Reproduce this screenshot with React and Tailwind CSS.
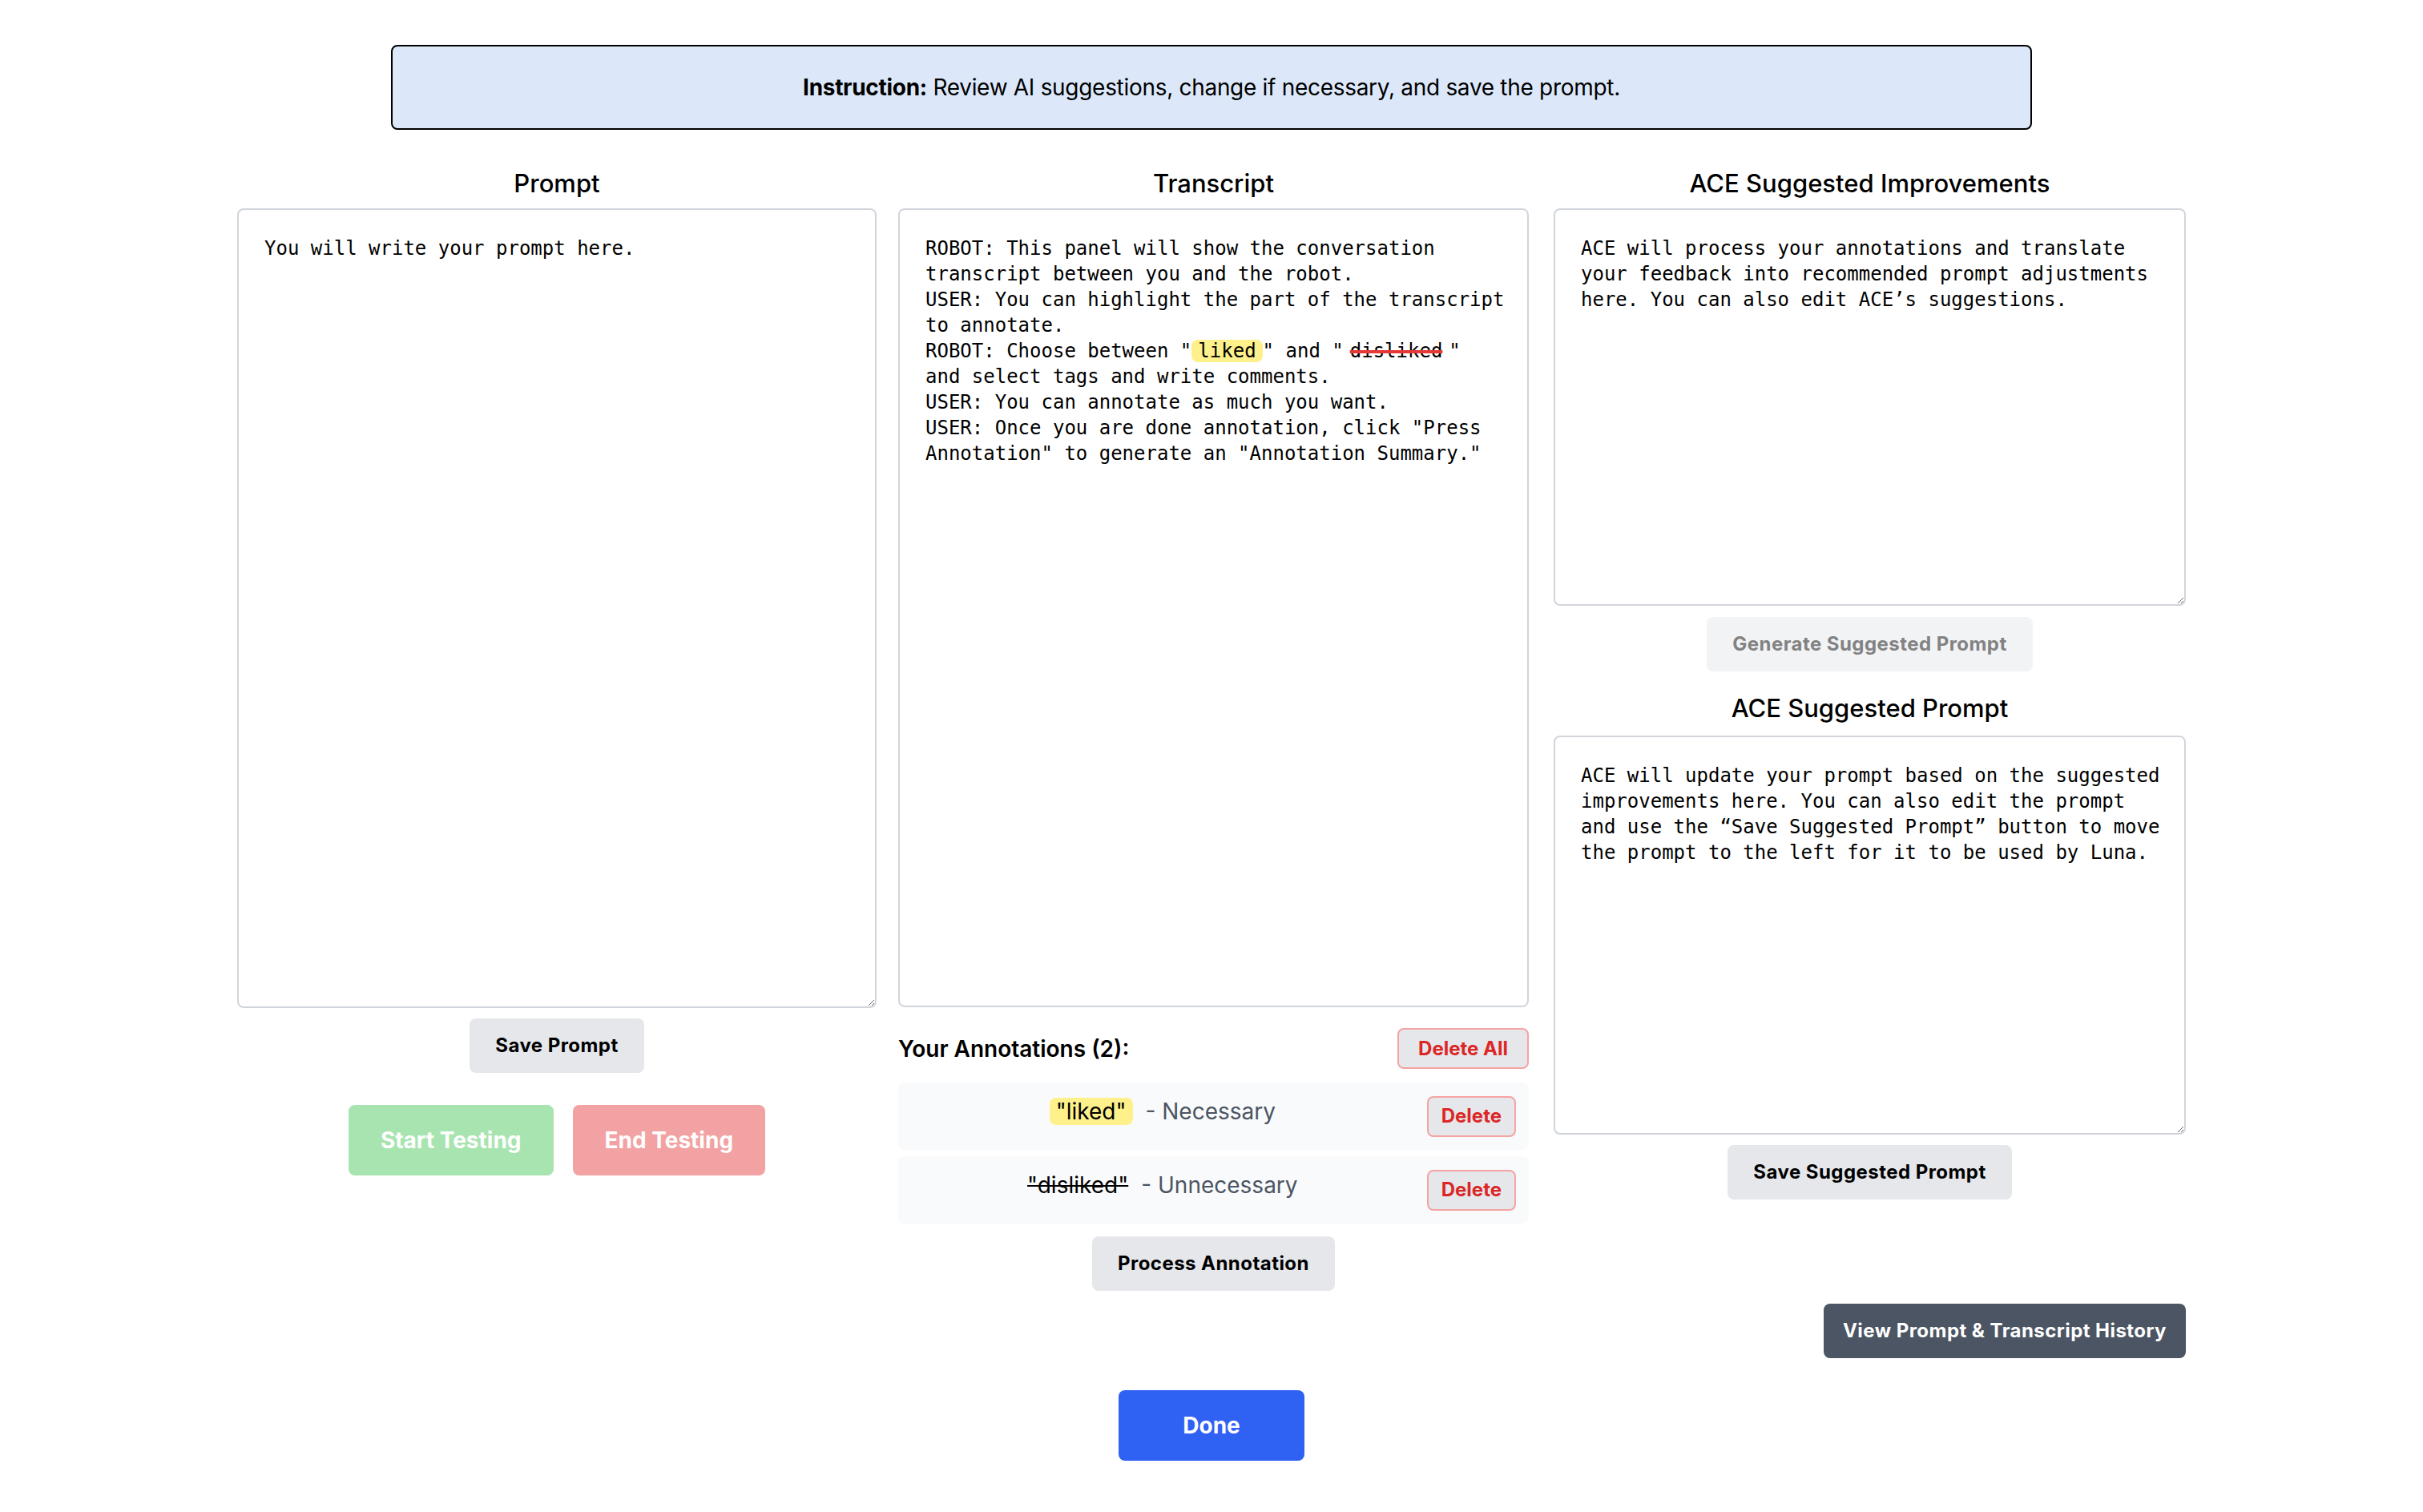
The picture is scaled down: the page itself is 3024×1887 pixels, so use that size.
const MONO = "font-['DejaVu_Sans_Mono',Menlo,monospace]";

function Heading({ children, className = "" }) {
  return (
    <h2 className={`text-center text-[31px] font-medium leading-[40px] ${className}`}>
      {children}
    </h2>
  );
}

function GrayButton({ children, className = "" }) {
  return (
    <button className={`h-[68px] rounded-[8px] bg-[#e5e7eb] px-[32px] text-[24px] font-bold tracking-[0.45px] text-black ${className}`}>
      {children}
    </button>
  );
}

function Box({ className = "", defaultValue }) {
  return (
    <textarea
      className={`block w-full resize-y rounded-[8px] border-2 border-[#d1d5db] bg-white p-[32px] ${MONO} text-[24px] leading-[32px] text-black outline-none ${className}`}
      defaultValue={defaultValue}
    />
  );
}

function Transcript() {
  return (
    <div className={`h-[997px] w-full rounded-[8px] border-2 border-[#d1d5db] bg-white p-[32px] ${MONO} whitespace-pre text-[24px] leading-[32px] text-black`}>
      <div>ROBOT: This panel will show the conversation</div>
      <div>transcript between you and the robot.</div>
      <div>USER: You can highlight the part of the transcript</div>
      <div>to annotate.</div>
      <div>
        ROBOT: Choose between "
        <span className="rounded-[8px] bg-[#fef08a] px-[8px]">liked</span>
        " and "
        <span className="px-[8px]">
          <span className="line-through decoration-[#e53935] decoration-[4px]">disliked</span>
        </span>
        "
      </div>
      <div>and select tags and write comments.</div>
      <div>USER: You can annotate as much you want.</div>
      <div>USER: Once you are done annotation, click "Press</div>
      <div>Annotation" to generate an "Annotation Summary."</div>
    </div>
  );
}

function AnnotationRow({ children }) {
  return (
    <div className="flex h-[84px] items-center gap-[16px] rounded-[8px] bg-[#f9fafb] px-[16px]">
      <div className="mb-[12px] flex-1 text-center text-[28px] leading-[40px]">{children}</div>
      <button className="h-[51px] rounded-[8px] border-2 border-[#f5a3a3] bg-[#e5e7eb] px-[16px] text-[24px] font-bold text-[#dc2626]">
        Delete
      </button>
    </div>
  );
}

export default function App() {
  return (
    <div className="min-h-screen bg-white pb-[64px] pt-[56px] font-['Inter',sans-serif] text-black">
      <div className="mx-auto w-[2048px] rounded-[8px] border-2 border-black bg-[#dce8fa] py-[31px] text-center text-[28px] leading-[40px] tracking-[-0.3px]">
        <strong className="font-bold">Instruction:</strong> Review AI suggestions, change if necessary, and save the prompt.
      </div>

      <div className="mx-auto mt-[47px] w-[2432px]">
        <div className="flex items-start">
          {/* prompt */}
          <section className="flex w-[801px] flex-col items-center">
            <Heading className="mb-[11px] w-full">Prompt</Heading>
            <Box className="h-[998px]" defaultValue="You will write your prompt here." />
            <GrayButton className="mt-[13px]">Save Prompt</GrayButton>
            <div className="mt-[40px] flex gap-[24px]">
              <button className="h-[88px] rounded-[8px] bg-[#a8e4b0] px-[40px] text-[28px] font-bold text-white">
                Start Testing
              </button>
              <button className="h-[88px] rounded-[8px] bg-[#f2a2a2] px-[40px] text-[28px] font-bold text-white">
                End Testing
              </button>
            </div>
          </section>

          {/* transcript + annotations */}
          <section className="ml-[27px] flex w-[787px] flex-col">
            <Heading className="mb-[11px]">Transcript</Heading>
            <Transcript />
            <div className="mt-[26px] flex items-center justify-between">
              <span className="text-[28px] font-semibold leading-[40px]">Your Annotations (2):</span>
              <button className="h-[51px] rounded-[8px] border-2 border-[#f5a3a3] bg-[#e5e7eb] px-[24px] text-[24px] font-bold text-[#dc2626]">
                Delete All
              </button>
            </div>
            <div className="mt-[17px] flex flex-col gap-[8px]">
              <AnnotationRow>
                <span className="rounded-[8px] bg-[#fef08a] px-[8px]">"liked"</span>
                <span className="ml-[16px] text-[#4b5563]">- Necessary</span>
              </AnnotationRow>
              <AnnotationRow>
                <span className="line-through">"disliked"</span>
                <span className="ml-[16px] text-[#4b5563]">- Unnecessary</span>
              </AnnotationRow>
            </div>
            <GrayButton className="mt-[16px] self-center">Process Annotation</GrayButton>
          </section>

          {/* ACE */}
          <section className="ml-[31px] flex w-[792px] flex-col items-center">
            <Heading className="mb-[11px] w-full">ACE Suggested Improvements</Heading>
            <Box
              className="h-[496px] pr-[26px]"
              defaultValue="ACE will process your annotations and translate your feedback into recommended prompt adjustments here. You can also edit ACE’s suggestions."
            />
            <button className="mt-[14px] h-[68px] rounded-[8px] bg-[#f2f3f5] px-[32px] text-[24px] font-bold tracking-[0.45px] text-[#828282]">
              Generate Suggested Prompt
            </button>
            <Heading className="mb-[14px] mt-[26px] w-full">ACE Suggested Prompt</Heading>
            <Box
              className="h-[498px] pr-[26px]"
              defaultValue="ACE will update your prompt based on the suggested improvements here. You can also edit the prompt and use the “Save Suggested Prompt” button to move the prompt to the left for it to be used by Luna."
            />
            <GrayButton className="mt-[13px]">Save Suggested Prompt</GrayButton>
          </section>
        </div>

        <div className="mt-[16px] flex justify-end">
          <button className="h-[68px] rounded-[8px] bg-[#4b5563] px-[24px] text-[24px] font-bold tracking-[0.45px] text-white">
            View Prompt &amp; Transcript History
          </button>
        </div>
      </div>

      <div className="mt-[40px] flex justify-center">
        <button className="h-[88px] rounded-[8px] bg-[#2f61f3] px-[80px] text-[28px] font-bold text-white">
          Done
        </button>
      </div>
    </div>
  );
}
